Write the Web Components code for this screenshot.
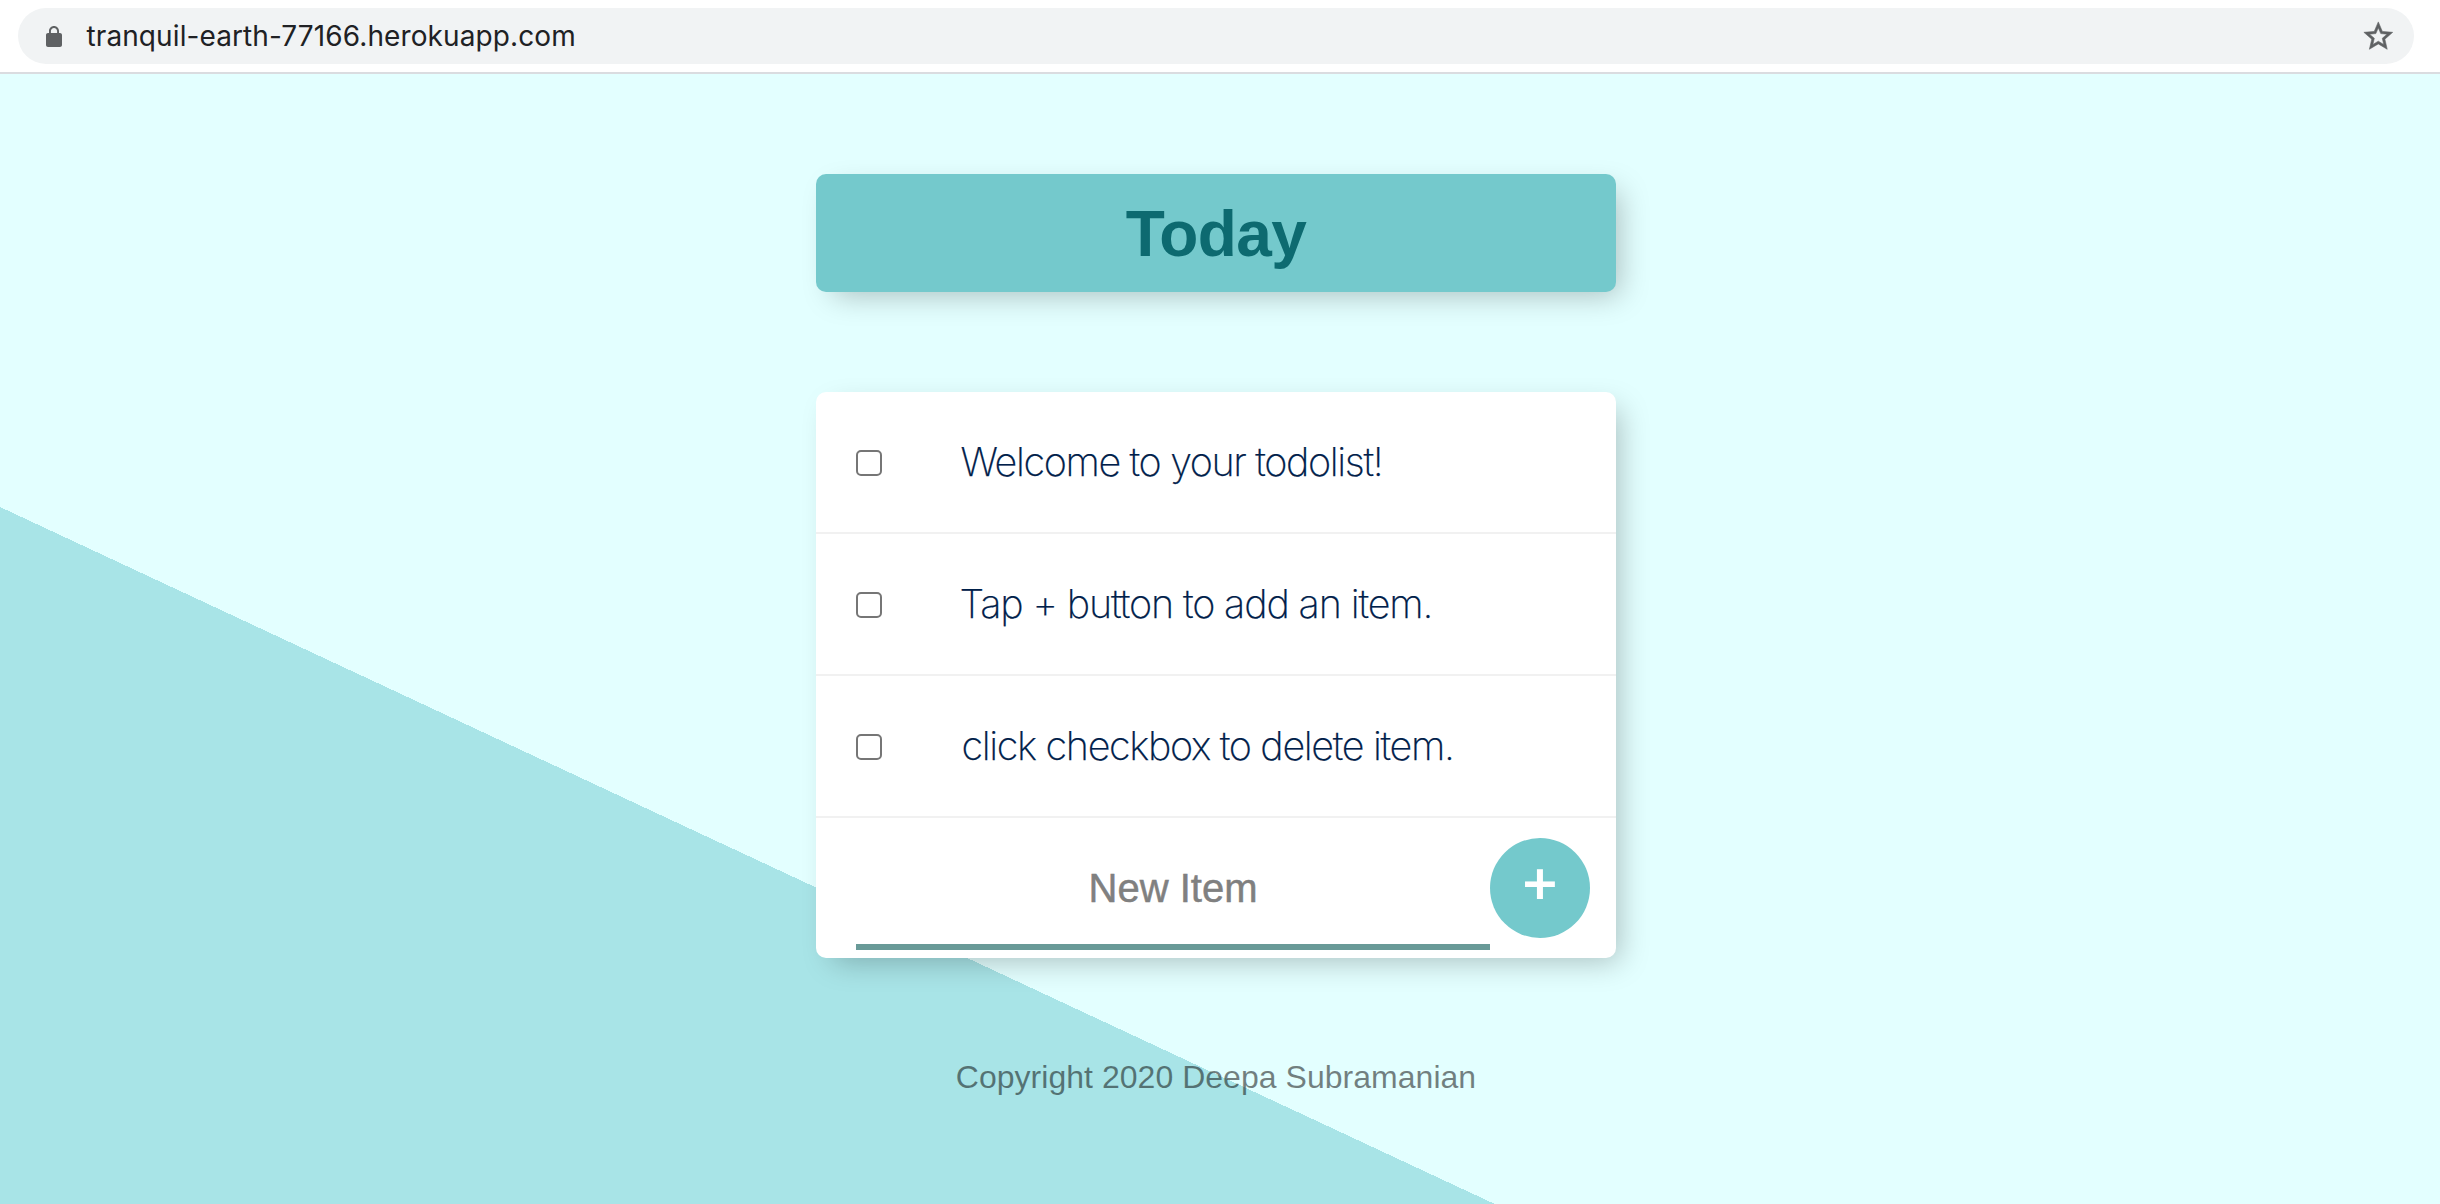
<!DOCTYPE html>
<html lang="en">
<head>
<meta charset="utf-8">
<title>To Do List</title>
<style>
  html, body { margin: 0; height: 100%; }
  body { font-family: "Liberation Sans", Arial, sans-serif; background: #fff; overflow: hidden; }
</style>
</head>
<body>
<todo-window>
  <address-bar slot="bar">tranquil-earth-77166.herokuapp.com</address-bar>
  <list-heading>Today</list-heading>
  <todo-list>
    <todo-item style="--tracking:-1.36px">Welcome to your todolist!</todo-item>
    <todo-item style="--tracking:-1.14px; --gap:77.5px">Tap + button to add an item.</todo-item>
    <todo-item style="--tracking:-1.34px; --gap:79.5px">click checkbox to delete item.</todo-item>
    <new-item>New Item</new-item>
  </todo-list>
  <page-footer>Copyright 2020 Deepa Subramanian</page-footer>
</todo-window>

<script>
  const define = (name, html) => {
    const template = document.createElement('template');
    template.innerHTML = html;
    customElements.define(name, class extends HTMLElement {
      constructor() {
        super();
        this.attachShadow({ mode: 'open' }).append(template.content.cloneNode(true));
      }
    });
  };

  define('todo-window', `
    <style>
      :host { display: flex; flex-direction: column; height: 1204px; }
      main {
        flex: 1; box-sizing: border-box; padding: 100px 8px 0 0;
        display: flex; flex-direction: column; align-items: center;
        background: linear-gradient(25deg, #a8e4e7 631.7px, #e3ffff 631.7px);
      }
    </style>
    <slot name="bar"></slot>
    <main><slot></slot></main>`);

  define('address-bar', `
    <style>
      :host { display: block; box-sizing: border-box; height: 74px; padding: 8px 26px 8px 18px;
              background: #fff; border-bottom: 2px solid #dadce0; }
      .pill { display: flex; align-items: center; box-sizing: border-box; height: 56px;
              padding: 0 18px 0 24px; border-radius: 28px; background: #f1f3f4; }
      .url { flex: 1; margin-left: 20.5px; font: 28px/56px Inter, sans-serif; letter-spacing: .1px; color: #202124; }
      svg { display: block; fill: #5f6163; }
      .lock { width: 24px; height: 24px; margin-top: 2px; }
      .star { width: 34.6px; height: 34.6px; stroke: #5f6163; stroke-width: .4; }
    </style>
    <div class="pill">
      <svg class="lock" viewBox="0 0 24 24"><path d="M18 8h-1V6c0-2.76-2.24-5-5-5S7 3.240 7 6v2H6c-1.100 0-2 .900-2 2v10c0 1.100.900 2 2 2h12c1.100 0 2-.900 2-2V10c0-1.100-.900-2-2-2zM8.900 8V6c0-1.710 1.390-3.100 3.100-3.100s3.100 1.390 3.100 3.100v2z"/></svg>
      <span class="url"><slot></slot></span>
      <svg class="star" viewBox="0 0 24 24"><path stroke-linejoin="round" d="M22 9.240l-7.190-.620L12 2 9.190 8.630 2 9.240l5.460 4.730L5.820 21 12 17.270 18.180 21l-1.630-7.030L22 9.240zM12 15.400l-3.760 2.270 1-4.280-3.320-2.880 4.380-.380L12 6.100l1.710 4.040 4.380.380-3.320 2.880 1 4.280L12 15.400z"/></svg>
    </div>`);

  define('list-heading', `
    <style>
      :host { display: block; width: 800px; height: 118px; border-radius: 10px;
              background: #74c9cc; box-shadow: 10px 10px 30px -7px rgba(0,0,0,.26); }
      h1 { margin: 0; padding-top: 1px; text-align: center; font-size: 64px; line-height: 118px;
           font-weight: bold; letter-spacing: -.6px; color: #0d6a70; }
    </style>
    <h1><slot></slot></h1>`);

  define('todo-list', `
    <style>
      :host { display: flex; flex-direction: column; width: 800px; margin-top: 100px; border-radius: 10px;
              background: #fff; box-shadow: 10px 10px 30px -7px rgba(0,0,0,.26); }
    </style>
    <slot></slot>`);

  define('todo-item', `
    <style>
      :host { display: flex; align-items: center; box-sizing: border-box; height: 142px;
              padding-left: 40px; border-bottom: 2px solid #f1f1f1; }
      .box { box-sizing: border-box; width: 26px; height: 26px; margin-top: 2px;
             border: 2px solid #767676; border-radius: 5px; background: #fff; }
      p { margin: 0 0 0 var(--gap, 78.500px); font: 200 39.500px/140px Inter, sans-serif;
          letter-spacing: var(--tracking, -1.300px); color: #00204a; white-space: nowrap;
          -webkit-text-stroke: .25px #00204a; }
    </style>
    <span class="box" role="checkbox" aria-checked="false"></span>
    <p><slot></slot></p>`);

  define('new-item', `
    <style>
      :host { display: flex; align-items: flex-start; box-sizing: border-box; height: 140px; padding: 14px 26px 0 40px; }
      .field { box-sizing: border-box; width: 634px; height: 118px; border-bottom: 6px solid #699a98;
               font-size: 40px; line-height: 112px; text-align: center; color: #808080;
               -webkit-text-stroke: .5px #808080; }
      button { box-sizing: border-box; width: 100px; height: 100px; margin: 6px 0 0; padding: 0 0 17px;
               border: 0; border-radius: 50%; background: #74c9cc; color: #fff;
               font: 500 62px/82px Inter, sans-serif; text-align: center; }
    </style>
    <div class="field"><slot></slot></div>
    <button type="button">+</button>`);

  define('page-footer', `
    <style>
      :host { display: block; margin-top: 100px; font-size: 32px; line-height: 38px; letter-spacing: .03px; color: rgba(0,0,0,.5); }
    </style>
    <slot></slot>`);
</script>
</body>
</html>
